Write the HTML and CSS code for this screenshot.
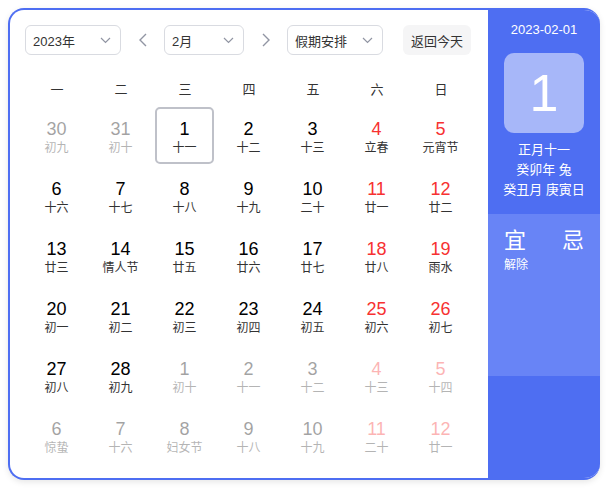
FILE: index.html
```html
<!DOCTYPE html>
<html lang="zh-CN">
<head>
<meta charset="utf-8">
<title>万年历</title>
<link rel="stylesheet" href="styles.css">
</head>
<body>
<div class="card">
  <div class="main">
    <div class="toolbar">
      <div class="select sel-year"><span>2023年</span><svg class="chev" width="11" height="7" viewBox="0 0 11 7"><path d="M1 1l4.5 4.5L10 1"/></svg></div>
      <div class="arrow"><svg width="8" height="14" viewBox="0 0 8 14"><path d="M7 1L1 7l6 6"/></svg></div>
      <div class="select sel-month"><span>2月</span><svg class="chev" width="11" height="7" viewBox="0 0 11 7"><path d="M1 1l4.5 4.5L10 1"/></svg></div>
      <div class="arrow"><svg width="8" height="14" viewBox="0 0 8 14"><path d="M1 1l6 6-6 6"/></svg></div>
      <div class="select sel-holiday"><span>假期安排</span><svg class="chev" width="11" height="7" viewBox="0 0 11 7"><path d="M1 1l4.5 4.5L10 1"/></svg></div>
      <div class="today-btn">返回今天</div>
    </div>
    <div class="weekdays">
      <span>一</span><span>二</span><span>三</span><span>四</span><span>五</span><span>六</span><span>日</span>
    </div>
    <div class="grid">
      <div class="cell out"><span class="num">30</span><span class="lunar">初九</span></div>
      <div class="cell out"><span class="num">31</span><span class="lunar">初十</span></div>
      <div class="cell selected"><span class="num">1</span><span class="lunar">十一</span></div>
      <div class="cell"><span class="num">2</span><span class="lunar">十二</span></div>
      <div class="cell"><span class="num">3</span><span class="lunar">十三</span></div>
      <div class="cell rest"><span class="num">4</span><span class="lunar">立春</span></div>
      <div class="cell rest"><span class="num">5</span><span class="lunar">元宵节</span></div>

      <div class="cell"><span class="num">6</span><span class="lunar">十六</span></div>
      <div class="cell"><span class="num">7</span><span class="lunar">十七</span></div>
      <div class="cell"><span class="num">8</span><span class="lunar">十八</span></div>
      <div class="cell"><span class="num">9</span><span class="lunar">十九</span></div>
      <div class="cell"><span class="num">10</span><span class="lunar">二十</span></div>
      <div class="cell rest"><span class="num">11</span><span class="lunar">廿一</span></div>
      <div class="cell rest"><span class="num">12</span><span class="lunar">廿二</span></div>

      <div class="cell"><span class="num">13</span><span class="lunar">廿三</span></div>
      <div class="cell"><span class="num">14</span><span class="lunar">情人节</span></div>
      <div class="cell"><span class="num">15</span><span class="lunar">廿五</span></div>
      <div class="cell"><span class="num">16</span><span class="lunar">廿六</span></div>
      <div class="cell"><span class="num">17</span><span class="lunar">廿七</span></div>
      <div class="cell rest"><span class="num">18</span><span class="lunar">廿八</span></div>
      <div class="cell rest"><span class="num">19</span><span class="lunar">雨水</span></div>

      <div class="cell"><span class="num">20</span><span class="lunar">初一</span></div>
      <div class="cell"><span class="num">21</span><span class="lunar">初二</span></div>
      <div class="cell"><span class="num">22</span><span class="lunar">初三</span></div>
      <div class="cell"><span class="num">23</span><span class="lunar">初四</span></div>
      <div class="cell"><span class="num">24</span><span class="lunar">初五</span></div>
      <div class="cell rest"><span class="num">25</span><span class="lunar">初六</span></div>
      <div class="cell rest"><span class="num">26</span><span class="lunar">初七</span></div>

      <div class="cell"><span class="num">27</span><span class="lunar">初八</span></div>
      <div class="cell"><span class="num">28</span><span class="lunar">初九</span></div>
      <div class="cell out"><span class="num">1</span><span class="lunar">初十</span></div>
      <div class="cell out"><span class="num">2</span><span class="lunar">十一</span></div>
      <div class="cell out"><span class="num">3</span><span class="lunar">十二</span></div>
      <div class="cell out rest"><span class="num">4</span><span class="lunar">十三</span></div>
      <div class="cell out rest"><span class="num">5</span><span class="lunar">十四</span></div>

      <div class="cell out"><span class="num">6</span><span class="lunar">惊蛰</span></div>
      <div class="cell out"><span class="num">7</span><span class="lunar">十六</span></div>
      <div class="cell out"><span class="num">8</span><span class="lunar">妇女节</span></div>
      <div class="cell out"><span class="num">9</span><span class="lunar">十八</span></div>
      <div class="cell out"><span class="num">10</span><span class="lunar">十九</span></div>
      <div class="cell out rest"><span class="num">11</span><span class="lunar">二十</span></div>
      <div class="cell out rest"><span class="num">12</span><span class="lunar">廿一</span></div>
    </div>
  </div>
  <div class="panel">
    <div class="panel-top">
      <div class="p-date">2023-02-01</div>
      <div class="p-big">1</div>
      <div class="p-lunar">
        <div>正月十一</div>
        <div>癸卯年 兔</div>
        <div>癸丑月 庚寅日</div>
      </div>
    </div>
    <div class="yiji">
      <div class="yj-col">
        <div class="yj-title">宜</div>
        <div class="yj-item">解除</div>
      </div>
      <div class="yj-col">
        <div class="yj-title">忌</div>
      </div>
    </div>
    <div class="panel-bottom"></div>
  </div>
</div>
</body>
</html>
```

FILE: styles.css
```css
html, body {
  margin: 0;
  padding: 0;
  background: #ffffff;
}

body {
  font-family: "Liberation Sans", "Noto Sans CJK SC", sans-serif;
  color: #333333;
}

.card {
  margin: 8px;
  width: 592px;
  height: 472px;
  box-sizing: border-box;
  border: 2px solid #4e6ef2;
  border-right: 0;
  border-radius: 16px;
  overflow: hidden;
  display: flex;
  background: #ffffff;
  box-shadow: 0 2px 6px rgba(0, 0, 0, 0.1);
}

.main {
  width: 478px;
  box-sizing: border-box;
  padding: 15px 15px 0 15px;
}

.toolbar {
  display: flex;
  align-items: center;
  height: 30px;
}

.select {
  height: 30px;
  box-sizing: border-box;
  border: 1px solid #d9dbe1;
  border-radius: 6px;
  display: flex;
  align-items: center;
  justify-content: space-between;
  padding: 0 9px 0 7px;
  font-size: 13px;
  color: #333333;
}

.sel-year { width: 96px; }
.sel-month { width: 80px; }
.sel-holiday { width: 96px; }

.chev path {
  fill: none;
  stroke: #9195a3;
  stroke-width: 1.2;
}

.arrow {
  width: 43px;
  height: 30px;
  display: flex;
  align-items: center;
  justify-content: center;
}

.arrow path {
  fill: none;
  stroke: #9195a3;
  stroke-width: 1.4;
}

.today-btn {
  margin-left: 20px;
  width: 68px;
  height: 30px;
  border-radius: 6px;
  background: #f5f5f6;
  display: flex;
  align-items: center;
  justify-content: center;
  font-size: 13px;
  color: #333333;
}

.weekdays {
  display: grid;
  grid-template-columns: repeat(7, 64px);
  margin-top: 15px;
  height: 36px;
  align-items: center;
  justify-items: center;
  font-size: 13px;
  color: #333333;
}

.grid {
  display: grid;
  grid-template-columns: repeat(7, 64px);
  grid-auto-rows: 60px;
}

.cell {
  margin: 1px 3px 2px 2px;
  border: 2px solid transparent;
  border-radius: 5px;
  display: flex;
  flex-direction: column;
  align-items: center;
  justify-content: center;
  padding-top: 2px;
}

.cell.selected {
  border-color: #bfc1c9;
}

.num {
  font-size: 18px;
  line-height: 22px;
  color: #000000;
}

.lunar {
  font-size: 12px;
  line-height: 16px;
  color: #333333;
}

.cell.rest .num {
  color: #f73131;
}

.cell.out {
  opacity: 0.36;
}

.panel {
  width: 112px;
  background: #4e6ef2;
  color: #ffffff;
  display: flex;
  flex-direction: column;
}

.panel-top {
  height: 204px;
  display: flex;
  flex-direction: column;
  align-items: center;
}

.p-date {
  margin-top: 11px;
  font-size: 13px;
  line-height: 18px;
}

.p-big {
  margin-top: 14px;
  width: 80px;
  height: 80px;
  border-radius: 10px;
  background: rgba(255, 255, 255, 0.5);
  font-size: 52px;
  line-height: 80px;
  text-align: center;
}

.p-lunar {
  margin-top: 7px;
  font-size: 13px;
  line-height: 20px;
  text-align: center;
}

.yiji {
  height: 162px;
  background: #6884f6;
  display: flex;
  justify-content: space-between;
  padding: 13px 16px 0 16px;
  box-sizing: border-box;
}

.yj-col {
  display: flex;
  flex-direction: column;
  align-items: flex-start;
}

.yj-title {
  font-size: 22px;
  line-height: 28px;
}

.yj-item {
  margin-top: 2px;
  font-size: 12px;
  line-height: 16px;
}

.panel-bottom {
  flex: 1;
}
```
